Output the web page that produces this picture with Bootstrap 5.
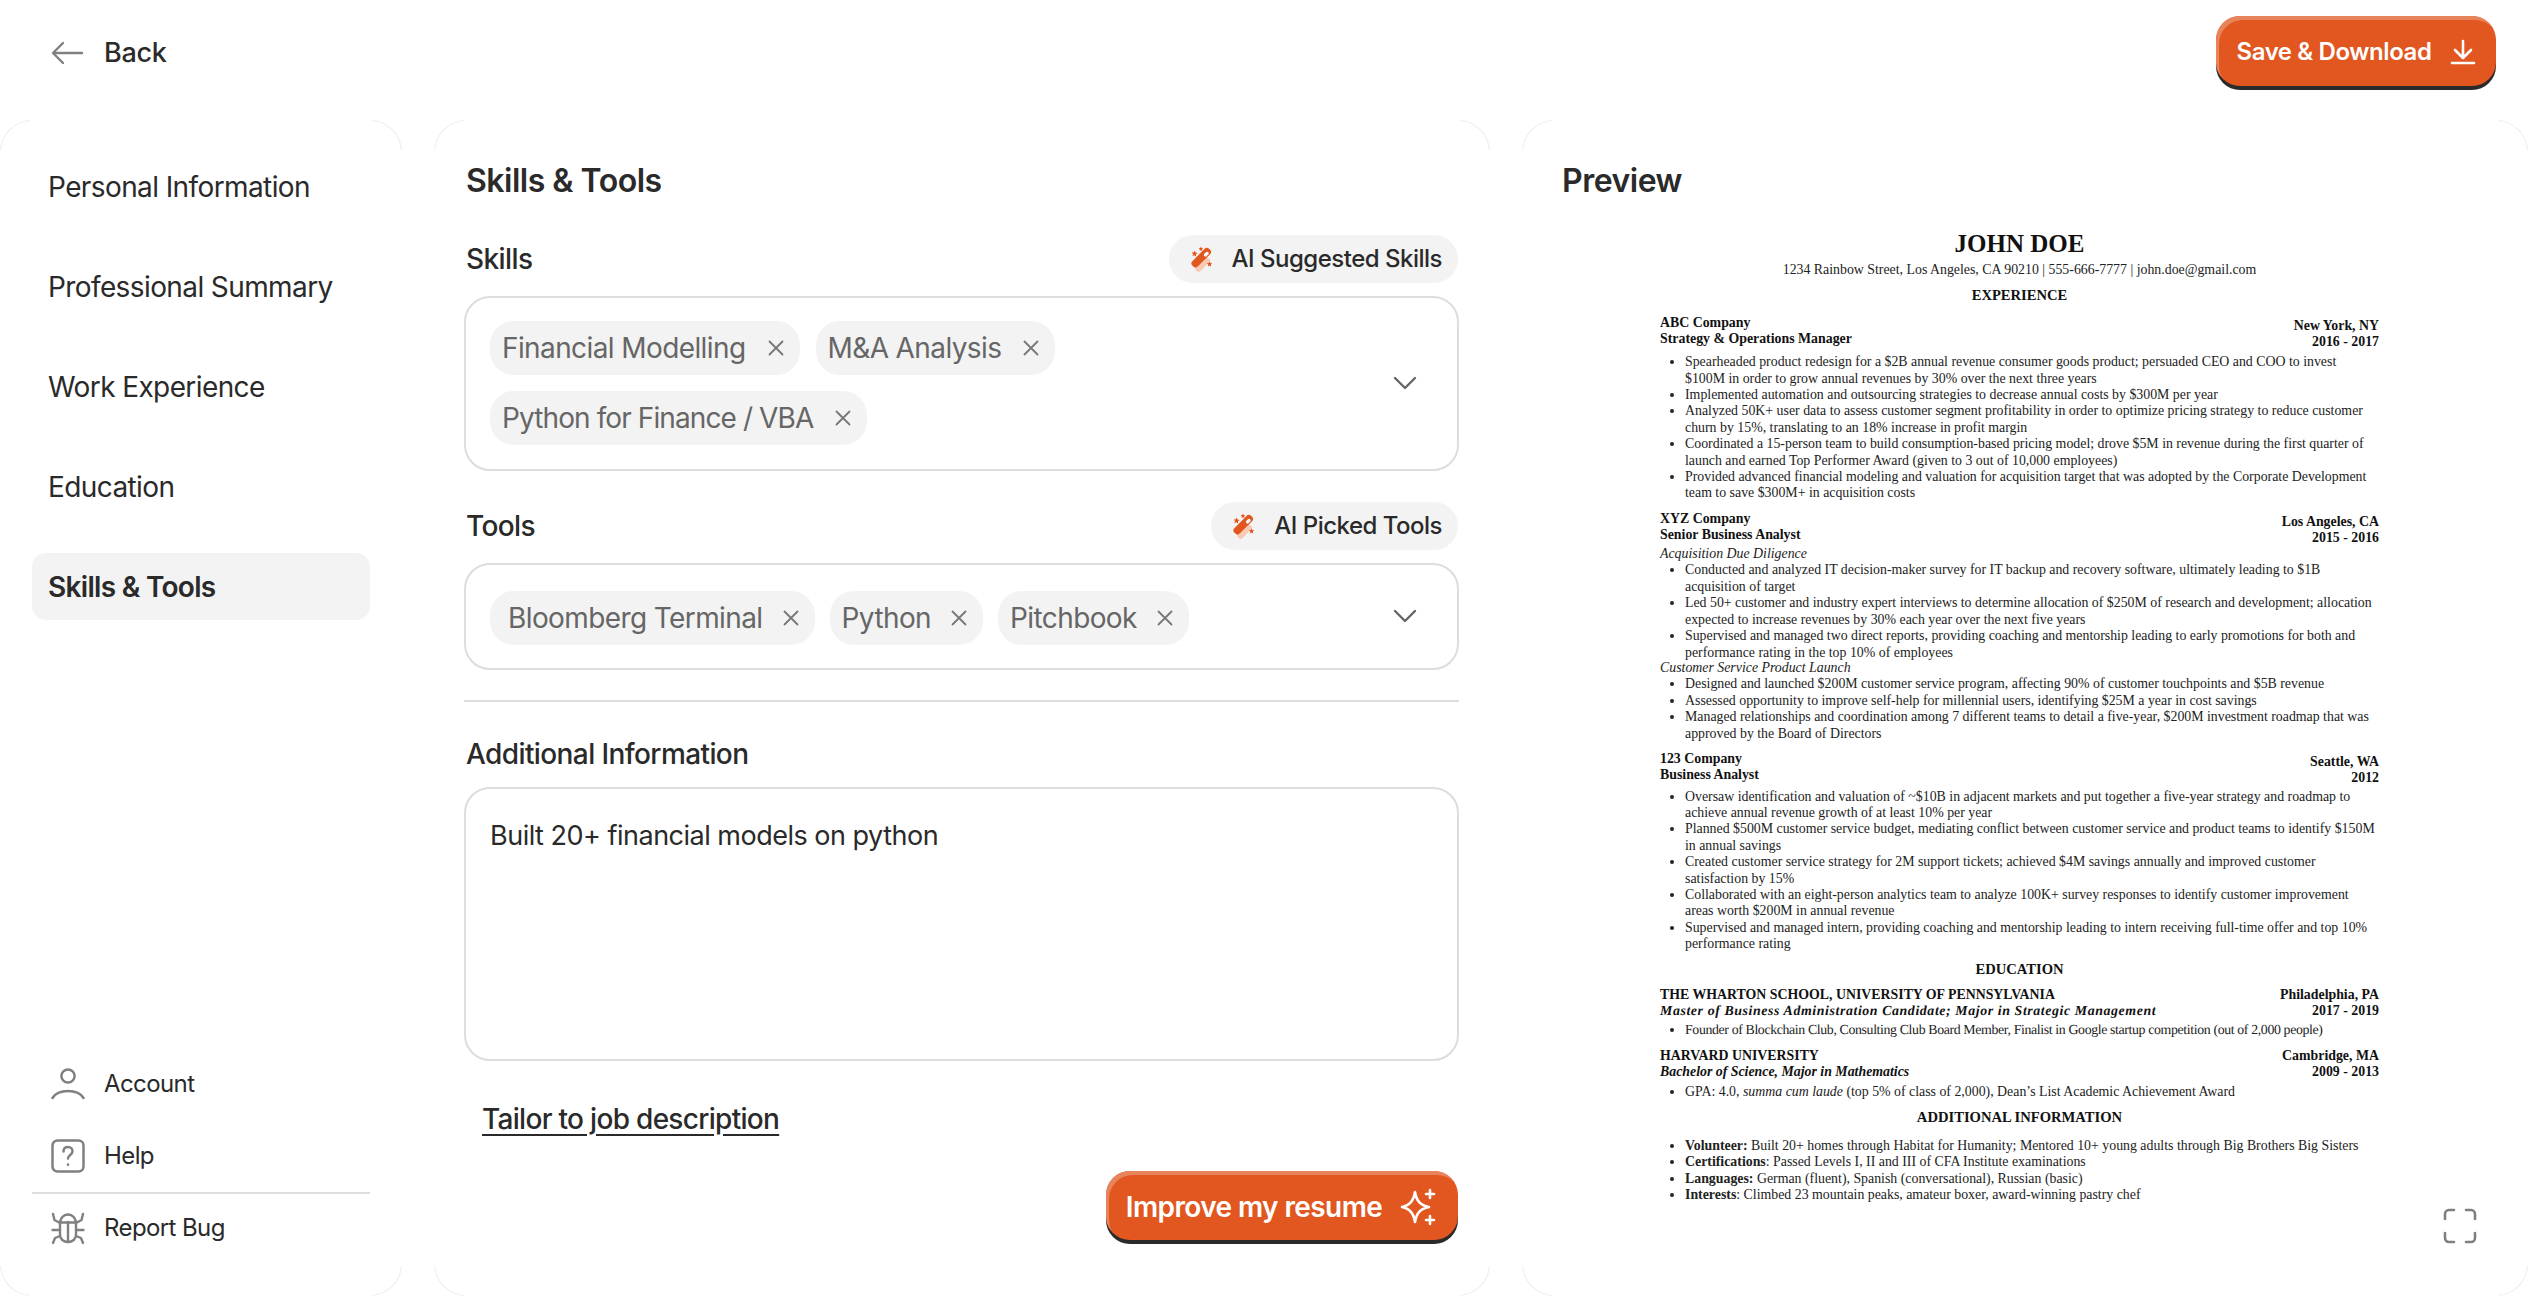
<!DOCTYPE html>
<html lang="en">
<head>
<meta charset="utf-8">
<title>Resume builder</title>
<link href="https://cdn.jsdelivr.net/npm/bootstrap@5.3.0/dist/css/bootstrap.min.css" rel="stylesheet">
<style>
html,body{height:100%}
body{font-family:Inter,"Liberation Sans",sans-serif;color:#2a2a2a;background:#fff;overflow:hidden}
.top-strip{height:120px;padding:16px 32px 0 50px}
.back-link{font-size:27px;font-weight:500;color:#2a2a2a;gap:20px;height:72px;padding-top:2px;text-decoration:none;letter-spacing:-.3px}
.cta{background:#e2561f;color:#fff;font-weight:600;border:0;padding-top:8px;box-shadow:inset 3px 4px 0 #e8845c,0 4px 0 #2a2a2a;display:inline-flex;align-items:center;justify-content:center}
.cta:hover{background:#e2561f;color:#fff}
.cta-save{width:280px;height:70px;border-radius:24px;font-size:24px;gap:18px;letter-spacing:-.4px}
.cta-improve{width:352px;height:69px;border-radius:24px;font-size:28px;gap:18px;letter-spacing:-.6px;margin-right:1px}
.panels{height:1176px;gap:32px}
.pane{border:1px solid transparent;border-radius:32px;
 background:
 linear-gradient(#fff,#fff) padding-box,
 linear-gradient(#fff,#fff) center/calc(100% - 60px) 100% no-repeat border-box,
 linear-gradient(#fff,#fff) center/100% calc(100% - 60px) no-repeat border-box,
 linear-gradient(#eee,#eee) border-box}
.pane-nav{width:402px;padding:32px 31px 33px 31px}
.pane-form{width:1056px;padding:35px 30px 0 29px}
.pane-preview{width:1006px;padding:35px 0 0 39px;position:relative}
.side-item{height:67px;margin-bottom:33px;padding:0 16px;font-size:28px;color:#2a2a2a;border-radius:14px;display:flex;align-items:center;text-decoration:none;letter-spacing:-.6px}
.side-item.is-on{background:#f3f3f3;font-weight:600;letter-spacing:-.7px}
.util-item{height:72px;font-size:24px;gap:19px;padding-left:19px;color:#2a2a2a;text-decoration:none;letter-spacing:-.6px}
.util-item.is-last{height:68px}
.util-rule{border-top:2px solid #ddd;opacity:1;margin:0}
.pane-title{font-size:32px;font-weight:600;line-height:50px;margin:0 0 0 2px;letter-spacing:-.5px}
.pane-preview .pane-title{margin-left:0}
.field-label{font-size:28px;font-weight:500;line-height:48px;margin:0 0 0 2px;letter-spacing:-.6px}
.field-row{margin-top:29px}
.field-row.second{margin-top:31px}
.ai-pill{background:#f3f3f3;border-radius:24px;height:48px;padding:0 16px 0 19px;margin-right:1px;font-size:24px;font-weight:500;gap:16px;color:#2a2a2a;border:0;letter-spacing:-.5px}
.pick-box{border:2px solid #ddd;border-radius:26px;padding:0 24px;position:relative;margin-top:13px}
.pick-tall{height:175px}
.pick-short{height:107px}
.chip-wrap{gap:16px}
.pick-short .chip-wrap{gap:15px}
.pick-tall .chip-wrap{padding-top:23px}
.pick-short .chip-wrap{padding-top:26px}
.tag-chip{background:#f3f3f3;border-radius:24px;font-size:28px;color:#666;height:54px;padding:0 16px 0 12px;gap:22px;letter-spacing:-.6px}
.pick-short .tag-chip{gap:20px}
.tag-chip.roomy{padding-left:18px}
.tag-chip.slim{letter-spacing:-.9px}
.chev{position:absolute;right:40px;top:50%;margin-top:-8px}
.form-rule{border-top:2px solid #ddd;opacity:1;margin:30px 0 28px}
.note-area{height:274px;margin-top:9px;border:2px solid #ddd;border-radius:26px;padding:27px 24px;font-size:27px;letter-spacing:-.5px;color:#2a2a2a;resize:none;box-shadow:none}
.job-link{font-size:28px;font-weight:500;color:#2a2a2a;text-underline-offset:5px;margin-left:18px;letter-spacing:-.7px}
.link-row{margin-top:37px}
.cta-row{margin-top:31px}
.sheet{width:719px;margin:24px 0 0 98px;font-family:"Liberation Serif","Times New Roman",serif;font-size:13.85px;line-height:16.4px;color:#222}
.sheet h1{font-size:25px;font-weight:700;text-align:center;line-height:28px;margin:0;color:#111}
.sheet .contact{text-align:center;margin:4px 0 0}
.sheet h2{font-size:14.6px;font-weight:700;text-align:center;line-height:17px;margin:9px 0 0;color:#111}
.sheet h2.edu{margin-top:8px}
.job-head{display:flex;justify-content:space-between;font-weight:700;color:#111;margin-top:9px}
.job-head.head-first{margin-top:10.6px}
.job-head .where{text-align:right;padding-top:3px;margin-bottom:-3px}
.sheet ul{margin:6.4px 0 0;padding:0 0 0 25px}
.sheet ul.flush{margin-top:0}
.sheet ul.close-a{margin-top:4.8px}
.sheet ul.close-b{margin-top:3px}
.sheet ul.open{margin-top:12px}
.sheet p{margin:0}
.sheet p.sub{margin-top:2.4px}
.sheet p.sub-b{margin-top:-1px}
.sheet .set-wide{text-rendering:geometricPrecision;letter-spacing:.6px}
.sheet .set-tight{text-rendering:geometricPrecision;letter-spacing:-.37px}
.expand{position:absolute;right:50px;bottom:51px}
</style>
</head>
<body>
<header class="top-strip d-flex justify-content-between align-items-start">
  <a href="#" class="back-link d-flex align-items-center">
    <svg width="34" height="24" viewBox="0 0 34 24" fill="none" stroke="#808080" stroke-width="2.4" stroke-linecap="round" stroke-linejoin="round"><path d="M32 12H4M13 2 3 12l10 10"/></svg>
    <span>Back</span>
  </a>
  <button class="btn cta cta-save" type="button">Save &amp; Download
    <svg width="26" height="26" viewBox="0 0 26 26" fill="none" stroke="#fff" stroke-width="2.6" stroke-linecap="round" stroke-linejoin="round"><path d="M13 2v16M5 11l8 8 8-8M2 24h22"/></svg>
  </button>
</header>
<main class="panels d-flex">
  <aside class="pane pane-nav d-flex flex-column justify-content-between">
    <nav class="d-flex flex-column">
      <a href="#" class="side-item">Personal Information</a>
      <a href="#" class="side-item">Professional Summary</a>
      <a href="#" class="side-item">Work Experience</a>
      <a href="#" class="side-item">Education</a>
      <a href="#" class="side-item is-on">Skills &amp; Tools</a>
    </nav>
    <div class="d-flex flex-column">
      <a href="#" class="util-item d-flex align-items-center">
        <svg width="34" height="34" viewBox="0 0 34 34" fill="none" stroke="#808080" stroke-width="2.5" stroke-linecap="round"><circle cx="17" cy="9" r="6.6"/><path d="M1.5 31c3-5 9-7 15.500-7s12.500 2 15.500 7"/></svg>
        <span>Account</span>
      </a>
      <a href="#" class="util-item d-flex align-items-center">
        <svg width="34" height="34" viewBox="0 0 34 34" fill="none" stroke="#808080" stroke-width="2.5" stroke-linecap="round" stroke-linejoin="round"><rect x="1.500" y="1.500" width="31" height="31" rx="5"/><path d="M12.500 12.500c0-3 2-4.500 4.500-4.500s4.500 1.800 4.500 4.200c0 3.800-4.500 3.600-4.500 7.300"/><path d="M17 25.500v.2"/></svg>
        <span>Help</span>
      </a>
      <hr class="util-rule">
      <a href="#" class="util-item is-last d-flex align-items-center">
        <svg width="34" height="34" viewBox="0 0 34 34" fill="none" stroke="#808080" stroke-width="2.4" stroke-linecap="round" stroke-linejoin="round"><path d="M9 13c0-6 3.500-9.500 8-9.500s8 3.500 8 9.500v11c0 4-3.500 7-8 7s-8-3-8-7z"/><path d="M17 11v20M9 11.500h16M9 12 3.500 9 2 3M25 12l5.500-3L32 3M9 19H1.500M25 19h7.500M9 25l-5 2-2 5M25 25l5 2 2 5"/></svg>
        <span>Report Bug</span>
      </a>
    </div>
  </aside>

  <section class="pane pane-form d-flex flex-column">
    <h2 class="pane-title">Skills &amp; Tools</h2>
    <div class="field-row d-flex justify-content-between align-items-center">
      <h3 class="field-label">Skills</h3>
      <button type="button" class="ai-pill d-flex align-items-center">
        <svg width="28" height="28" viewBox="0 0 26 26"><path d="M13 6.500l6 6-9 9.500a3 3 0 0 1-5-1 3 3 0 0 1 0-3z" transform="translate(2 2)" fill="#f8c9b4"/><path d="M15.500 3.500a2.500 2.500 0 0 1 4 0l1 1a2.500 2.500 0 0 1 0 4L9 20a2.600 2.600 0 0 1-4 0l-1-1a2.600 2.600 0 0 1 0-4z" fill="#e2561f"/><rect x="15.500" y="6" width="3" height="5" rx="1.500" transform="rotate(45 17 8.500)" fill="#fff"/><path d="M6 5l1 2 2 .5-1.600 1.200L7.500 11 6 9.600 4 10.500l.8-2L3.500 7l2-.2zM12 1.500l.6 1.400 1.400.2-1 1 .2 1.400-1.200-.7-1.200.7.200-1.400-1-1 1.400-.2zM20 15l.7 1.600 1.800.3-1.300 1.200.3 1.800-1.500-.9-1.500.9.300-1.800-1.300-1.200 1.800-.3z" fill="#e2561f"/></svg>
        <span>AI Suggested Skills</span>
      </button>
    </div>
    <div class="pick-box pick-tall">
      <div class="chip-wrap d-flex flex-wrap">
        <span class="tag-chip d-inline-flex align-items-center">Financial Modelling
          <svg width="16" height="16" viewBox="0 0 16 16" stroke="#777" stroke-width="1.800" stroke-linecap="round"><path d="M1.500 1.500l13 13M14.500 1.500l-13 13"/></svg></span>
        <span class="tag-chip d-inline-flex align-items-center">M&amp;A Analysis
          <svg width="16" height="16" viewBox="0 0 16 16" stroke="#777" stroke-width="1.800" stroke-linecap="round"><path d="M1.500 1.500l13 13M14.500 1.500l-13 13"/></svg></span>
        <span class="tag-chip slim d-inline-flex align-items-center">Python for Finance / VBA
          <svg width="16" height="16" viewBox="0 0 16 16" stroke="#777" stroke-width="1.800" stroke-linecap="round"><path d="M1.500 1.500l13 13M14.500 1.500l-13 13"/></svg></span>
      </div>
      <svg class="chev" width="24" height="14" viewBox="0 0 24 14" fill="none" stroke="#666" stroke-width="2.400" stroke-linecap="round" stroke-linejoin="round"><path d="M2 2l10 10L22 2"/></svg>
    </div>
    <div class="field-row second d-flex justify-content-between align-items-center">
      <h3 class="field-label">Tools</h3>
      <button type="button" class="ai-pill d-flex align-items-center">
        <svg width="28" height="28" viewBox="0 0 26 26"><path d="M13 6.500l6 6-9 9.500a3 3 0 0 1-5-1 3 3 0 0 1 0-3z" transform="translate(2 2)" fill="#f8c9b4"/><path d="M15.500 3.500a2.500 2.500 0 0 1 4 0l1 1a2.500 2.500 0 0 1 0 4L9 20a2.600 2.600 0 0 1-4 0l-1-1a2.600 2.600 0 0 1 0-4z" fill="#e2561f"/><rect x="15.500" y="6" width="3" height="5" rx="1.500" transform="rotate(45 17 8.500)" fill="#fff"/><path d="M6 5l1 2 2 .5-1.600 1.200L7.500 11 6 9.600 4 10.500l.8-2L3.500 7l2-.2zM12 1.500l.6 1.400 1.400.2-1 1 .2 1.400-1.200-.7-1.200.7.200-1.400-1-1 1.400-.2zM20 15l.7 1.600 1.800.3-1.300 1.200.3 1.800-1.500-.9-1.500.9.300-1.800-1.300-1.200 1.800-.3z" fill="#e2561f"/></svg>
        <span>AI Picked Tools</span>
      </button>
    </div>
    <div class="pick-box pick-short">
      <div class="chip-wrap d-flex flex-wrap">
        <span class="tag-chip roomy d-inline-flex align-items-center">Bloomberg Terminal
          <svg width="16" height="16" viewBox="0 0 16 16" stroke="#777" stroke-width="1.800" stroke-linecap="round"><path d="M1.500 1.500l13 13M14.500 1.500l-13 13"/></svg></span>
        <span class="tag-chip d-inline-flex align-items-center">Python
          <svg width="16" height="16" viewBox="0 0 16 16" stroke="#777" stroke-width="1.800" stroke-linecap="round"><path d="M1.500 1.500l13 13M14.500 1.500l-13 13"/></svg></span>
        <span class="tag-chip d-inline-flex align-items-center">Pitchbook
          <svg width="16" height="16" viewBox="0 0 16 16" stroke="#777" stroke-width="1.800" stroke-linecap="round"><path d="M1.500 1.500l13 13M14.500 1.500l-13 13"/></svg></span>
      </div>
      <svg class="chev" width="24" height="14" viewBox="0 0 24 14" fill="none" stroke="#666" stroke-width="2.400" stroke-linecap="round" stroke-linejoin="round"><path d="M2 2l10 10L22 2"/></svg>
    </div>
    <hr class="form-rule">
    <h3 class="field-label">Additional Information</h3>
    <textarea class="form-control note-area" aria-label="Additional Information">Built 20+ financial models on python</textarea>
    <div class="link-row"><a href="#" class="job-link">Tailor to job description</a></div>
    <div class="cta-row d-flex justify-content-end">
      <button class="btn cta cta-improve" type="button">Improve my resume
        <svg width="38" height="38" viewBox="0 0 38 38" fill="none" stroke="#fff" stroke-width="2.600" stroke-linejoin="round"><path d="M15 4c1.500 9 5 13 14 15-9 2-12.500 6-14 15-1.500-9-5-13-13-15 8-2 11.500-6 13-15z"/><path d="M30 2v8M26 6h8M30 28v8M26 32h8" stroke-linecap="round"/></svg>
      </button>
    </div>
  </section>

  <section class="pane pane-preview">
    <h2 class="pane-title">Preview</h2>
    <article class="sheet">
      <h1>JOHN DOE</h1>
      <p class="contact">1234 Rainbow Street, Los Angeles, CA 90210 | 555-666-7777 | john.doe@gmail.com</p>
      <h2>EXPERIENCE</h2>
      <div class="job-head head-first"><div>ABC Company<br>Strategy &amp; Operations Manager</div><div class="where">New York, NY<br>2016 - 2017</div></div>
      <ul>
        <li>Spearheaded product redesign for a $2B annual revenue consumer goods product; persuaded CEO and COO to invest $100M in order to grow annual revenues by 30% over the next three years</li>
        <li>Implemented automation and outsourcing strategies to decrease annual costs by $300M per year</li>
        <li>Analyzed 50K+ user data to assess customer segment profitability in order to optimize pricing strategy to reduce customer churn by 15%, translating to an 18% increase in profit margin</li>
        <li>Coordinated a 15-person team to build consumption-based pricing model; drove $5M in revenue during the first quarter of launch and earned Top Performer Award (given to 3 out of 10,000 employees)</li>
        <li>Provided advanced financial modeling and valuation for acquisition target that was adopted by the Corporate Development team to save $300M+ in acquisition costs</li>
      </ul>
      <div class="job-head"><div>XYZ Company<br>Senior Business Analyst</div><div class="where">Los Angeles, CA<br>2015 - 2016</div></div>
      <p class="fst-italic sub">Acquisition Due Diligence</p>
      <ul class="flush">
        <li>Conducted and analyzed IT decision-maker survey for IT backup and recovery software, ultimately leading to $1B acquisition of target</li>
        <li>Led 50+ customer and industry expert interviews to determine allocation of $250M of research and development; allocation expected to increase revenues by 30% each year over the next five years</li>
        <li>Supervised and managed two direct reports, providing coaching and mentorship leading to early promotions for both and performance rating in the top 10% of employees</li>
      </ul>
      <p class="fst-italic sub-b">Customer Service Product Launch</p>
      <ul class="flush">
        <li>Designed and launched $200M customer service program, affecting 90% of customer touchpoints and $5B revenue</li>
        <li>Assessed opportunity to improve self-help for millennial users, identifying $25M a year in cost savings</li>
        <li>Managed relationships and coordination among 7 different teams to detail a five-year, $200M investment roadmap that was approved by the Board of Directors</li>
      </ul>
      <div class="job-head"><div>123 Company<br>Business Analyst</div><div class="where">Seattle, WA<br>2012</div></div>
      <ul class="close-a">
        <li>Oversaw identification and valuation of ~$10B in adjacent markets and put together a five-year strategy and roadmap to achieve annual revenue growth of at least 10% per year</li>
        <li>Planned $500M customer service budget, mediating conflict between customer service and product teams to identify $150M in annual savings</li>
        <li>Created customer service strategy for 2M support tickets; achieved $4M savings annually and improved customer satisfaction by 15%</li>
        <li>Collaborated with an eight-person analytics team to analyze 100K+ survey responses to identify customer improvement areas worth $200M in annual revenue</li>
        <li>Supervised and managed intern, providing coaching and mentorship leading to intern receiving full-time offer and top 10% performance rating</li>
      </ul>
      <h2 class="edu">EDUCATION</h2>
      <div class="job-head"><div>THE WHARTON SCHOOL, UNIVERSITY OF PENNSYLVANIA<br><em class="set-wide">Master of Business Administration Candidate; Major in Strategic Management</em></div><div class="text-end">Philadelphia, PA<br>2017 - 2019</div></div>
      <ul class="close-b"><li class="set-tight">Founder of Blockchain Club, Consulting Club Board Member, Finalist in Google startup competition (out of 2,000 people)</li></ul>
      <div class="job-head"><div>HARVARD UNIVERSITY<br><em>Bachelor of Science, Major in Mathematics</em></div><div class="text-end">Cambridge, MA<br>2009 - 2013</div></div>
      <ul class="close-b"><li>GPA: 4.0, <em>summa cum laude</em> (top 5% of class of 2,000), Dean’s List Academic Achievement Award</li></ul>
      <h2>ADDITIONAL INFORMATION</h2>
      <ul class="open">
        <li><b>Volunteer:</b> Built 20+ homes through Habitat for Humanity; Mentored 10+ young adults through Big Brothers Big Sisters</li>
        <li><b>Certifications</b>: Passed Levels I, II and III of CFA Institute examinations</li>
        <li><b>Languages:</b> German (fluent), Spanish (conversational), Russian (basic)</li>
        <li><b>Interests</b>: Climbed 23 mountain peaks, amateur boxer, award-winning pastry chef</li>
      </ul>
    </article>
    <svg class="expand" width="34" height="36" viewBox="0 0 34 36" fill="none" stroke="#808080" stroke-width="2.600" stroke-linecap="round" stroke-linejoin="round"><path d="M2 11V6a4 4 0 0 1 4-4h5M23 2h5a4 4 0 0 1 4 4v5M32 25v5a4 4 0 0 1-4 4h-5M11 34H6a4 4 0 0 1-4-4v-5"/></svg>
  </section>
</main>
<script src="https://cdn.jsdelivr.net/npm/bootstrap@5.3.0/dist/js/bootstrap.bundle.min.js"></script>
</body>
</html>
